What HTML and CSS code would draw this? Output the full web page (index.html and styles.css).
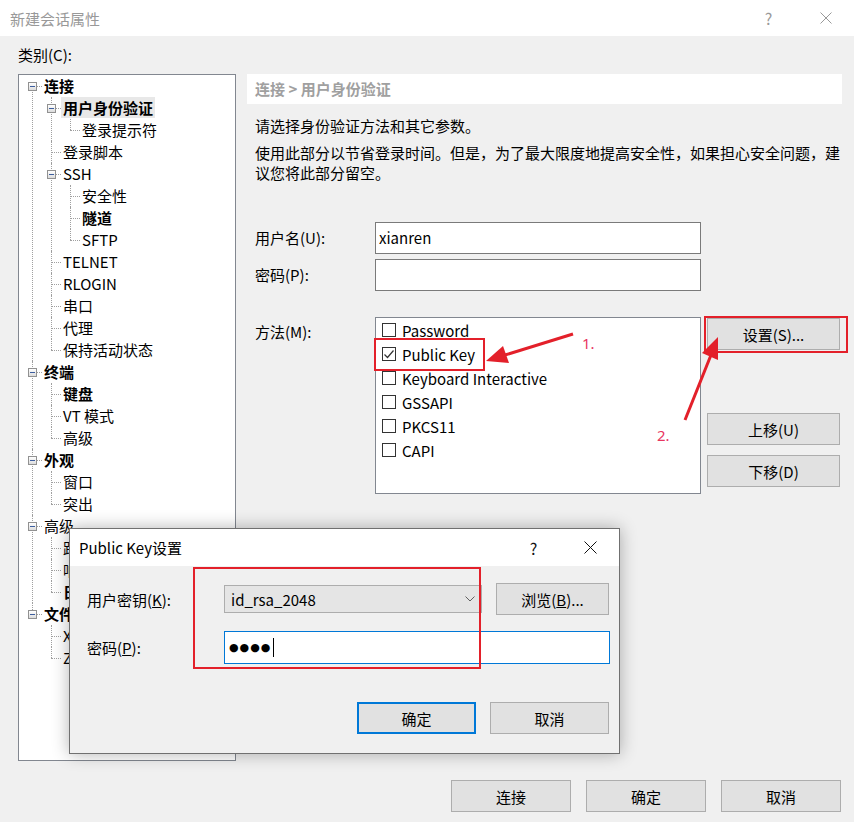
FILE: index.html
```html
<!DOCTYPE html>
<html lang="zh-CN">
<head>
    <meta charset="UTF-8">
    <title>新建会话属性</title>
    <link rel="stylesheet" href="styles.css">
</head>
<body>
    <div class="window">
        <div class="titlebar">
            <span class="title">新建会话属性</span>
            <span class="tb-btn">?</span>
            <span class="tb-btn">
                <svg width="12" height="12" viewBox="0 0 12 12"><path d="M0.5 0.5L11.5 11.5M11.5 0.5L0.5 11.5" stroke="#999" stroke-width="1"/></svg>
            </span>
        </div>

        <div class="body">
            <div class="cat-label">类别(C):</div>
            <div class="columns">
                <div class="tree-box">
                    <ul class="tree">
                        <li><div class="row"><i class="box"></i><span class="b">连接</span></div>
                            <ul>
                                <li><div class="row"><i class="box"></i><span class="b sel">用户身份验证</span></div>
                                    <ul>
                                        <li><div class="row"><span>登录提示符</span></div></li>
                                    </ul>
                                </li>
                                <li><div class="row"><span>登录脚本</span></div></li>
                                <li><div class="row"><i class="box"></i><span>SSH</span></div>
                                    <ul>
                                        <li><div class="row"><span>安全性</span></div></li>
                                        <li><div class="row"><span class="b">隧道</span></div></li>
                                        <li><div class="row"><span>SFTP</span></div></li>
                                    </ul>
                                </li>
                                <li><div class="row"><span>TELNET</span></div></li>
                                <li><div class="row"><span>RLOGIN</span></div></li>
                                <li><div class="row"><span>串口</span></div></li>
                                <li><div class="row"><span>代理</span></div></li>
                                <li><div class="row"><span>保持活动状态</span></div></li>
                            </ul>
                        </li>
                        <li><div class="row"><i class="box"></i><span class="b">终端</span></div>
                            <ul>
                                <li><div class="row"><span class="b">键盘</span></div></li>
                                <li><div class="row"><span>VT 模式</span></div></li>
                                <li><div class="row"><span>高级</span></div></li>
                            </ul>
                        </li>
                        <li><div class="row"><i class="box"></i><span class="b">外观</span></div>
                            <ul>
                                <li><div class="row"><span>窗口</span></div></li>
                                <li><div class="row"><span>突出</span></div></li>
                            </ul>
                        </li>
                        <li><div class="row"><i class="box"></i><span>高级</span></div>
                            <ul>
                                <li><div class="row"><span>跟踪</span></div></li>
                                <li><div class="row"><span>响铃</span></div></li>
                                <li><div class="row"><span class="b">日志</span></div></li>
                            </ul>
                        </li>
                        <li><div class="row"><i class="box"></i><span class="b">文件传输</span></div>
                            <ul>
                                <li><div class="row"><span>X/YMODEM</span></div></li>
                                <li><div class="row"><span>ZMODEM</span></div></li>
                            </ul>
                        </li>
                    </ul>
                </div>

                <div class="panel">
                    <div class="crumb">连接 &gt; 用户身份验证</div>
                    <p class="desc">请选择身份验证方法和其它参数。</p>
                    <p class="desc desc2">使用此部分以节省登录时间。但是，为了最大限度地提高安全性，如果担心安全问题，建议您将此部分留空。</p>

                    <div class="field">
                        <label>用户名(U):</label>
                        <input class="text-input" type="text" value="xianren">
                    </div>
                    <div class="field field-pw">
                        <label>密码(P):</label>
                        <input class="text-input" type="text" value="">
                    </div>

                    <div class="method">
                        <label>方法(M):</label>
                        <div class="listbox">
                            <div class="opt"><span class="chk"></span>Password</div>
                            <div class="opt"><span class="chk"><svg width="12" height="12" viewBox="0 0 12 12"><path d="M1.5 6.5L4.5 9.5L10.5 2.5" fill="none" stroke="#333" stroke-width="1.2"/></svg></span>Public Key</div>
                            <div class="opt"><span class="chk"></span>Keyboard Interactive</div>
                            <div class="opt"><span class="chk"></span>GSSAPI</div>
                            <div class="opt"><span class="chk"></span>PKCS11</div>
                            <div class="opt"><span class="chk"></span>CAPI</div>
                        </div>
                        <div class="side">
                            <button class="btn side-btn">设置(S)...</button>
                            <button class="btn side-btn up-btn">上移(U)</button>
                            <button class="btn side-btn down-btn">下移(D)</button>
                        </div>
                    </div>
                </div>
            </div>

            <div class="footer">
                <button class="btn foot-btn">连接</button>
                <button class="btn foot-btn">确定</button>
                <button class="btn foot-btn">取消</button>
            </div>
        </div>
    </div>

    <div class="sub">
        <div class="sub-title">
            <span class="sub-name">Public Key设置</span>
            <span class="tb-btn sub-tb">?</span>
            <span class="tb-btn sub-tb">
                <svg width="13" height="13" viewBox="0 0 13 13"><path d="M0.5 0.5L12.5 12.5M12.5 0.5L0.5 12.5" stroke="#111" stroke-width="1"/></svg>
            </span>
        </div>
        <div class="sub-body">
            <div class="sub-row">
                <label>用户密钥(<u>K</u>):</label>
                <div class="combo">
                    <span>id_rsa_2048</span>
                    <svg width="10" height="6" viewBox="0 0 10 6"><path d="M0.5 0.5L5 5L9.5 0.5" fill="none" stroke="#606060" stroke-width="1"/></svg>
                </div>
                <button class="btn browse">浏览(<u>B</u>)...</button>
            </div>
            <div class="sub-row sub-row2">
                <label>密码(<u>P</u>):</label>
                <div class="pw-input"><span class="dots">●●●●</span><span class="caret"></span></div>
            </div>
            <div class="sub-actions">
                <button class="btn sub-btn default">确定</button>
                <button class="btn sub-btn">取消</button>
            </div>
        </div>
    </div>

    <!-- 标注 -->
    <div class="mark mark-pk"></div>
    <div class="mark mark-set"></div>
    <div class="mark mark-key"></div>
    <svg class="arrows" width="854" height="822" viewBox="0 0 854 822">
        <line x1="573" y1="334" x2="505" y2="355" stroke="#e3202a" stroke-width="3"/>
        <polygon points="486,361 509,363 503,346" fill="#e3202a"/>
        <line x1="685" y1="420" x2="711" y2="355" stroke="#e3202a" stroke-width="3"/>
        <polygon points="718,337 718,360 702,353" fill="#e3202a"/>
    </svg>
    <span class="num num1">1.</span>
    <span class="num num2">2.</span>
</body>
</html>
```

FILE: styles.css
```css
body {
    margin: 0;
    width: 854px;
    height: 822px;
    overflow: hidden;
    position: relative;
    background: #f0f0f0;
    font-family: "Noto Sans CJK SC", "Noto Sans", sans-serif;
    font-size: 15px;
    color: #000;
}
.titlebar {
    height: 36px;
    background: #fff;
    display: flex;
    align-items: center;
}
.title {
    flex: 1;
    padding-left: 10px;
    color: #999;
}
.tb-btn {
    width: 57px;
    height: 36px;
    display: flex;
    align-items: center;
    justify-content: center;
    color: #999;
    font-size: 16px;
}
.body {
    padding: 0 12px 0 18px;
}
.cat-label {
    height: 38px;
    box-sizing: border-box;
    padding-top: 9px;
    line-height: 20px;
}
.columns {
    display: flex;
    gap: 11px;
    height: 687px;
}
.tree-box {
    width: 218px;
    box-sizing: border-box;
    border: 1px solid #828790;
    background: #fff;
    padding-top: 0;
    overflow: hidden;
}
.tree, .tree ul {
    list-style: none;
    margin: 0;
    padding: 0;
}
.tree ul {
    padding-left: 19px;
}
.tree li {
    position: relative;
}
.tree li::before {
    content: '';
    position: absolute;
    left: 13px;
    top: 11px;
    width: 10px;
    border-top: 1px dotted #a0a0a0;
}
.tree li::after {
    content: '';
    position: absolute;
    left: 13px;
    top: 0;
    bottom: 0;
    border-left: 1px dotted #a0a0a0;
}
.tree > li:first-child::after {
    top: 11px;
}
.tree li:last-child::after {
    bottom: auto;
    height: 11px;
}
.row {
    position: relative;
    height: 22px;
    line-height: 22px;
    padding-left: 25px;
    white-space: nowrap;
}
.box {
    position: absolute;
    left: 9px;
    top: 7px;
    width: 9px;
    height: 9px;
    box-sizing: border-box;
    border: 1px solid #919191;
    background: linear-gradient(#3d5e9e, #3d5e9e) center / 5px 1px no-repeat, linear-gradient(#fff, #dcdcdc);
    z-index: 1;
}
.b {
    font-weight: bold;
}
.sel {
    background: #e8e8e8;
    padding: 0 2px;
    margin-left: -2px;
}
.panel {
    flex: 1;
}
.crumb {
    height: 30px;
    line-height: 30px;
    background: #fff;
    color: #a0a0a0;
    font-weight: bold;
    padding-left: 8px;
}
.desc {
    margin: 12px 0 0;
    padding-left: 8px;
    width: 586px;
    line-height: 20px;
}
.desc2 {
    margin-top: 7px;
}
.field {
    display: flex;
    align-items: center;
    padding-left: 8px;
    margin-top: 39px;
}
.field-pw {
    margin-top: 5px;
}
.field label, .method label {
    width: 120px;
    line-height: 20px;
}
.text-input {
    width: 326px;
    height: 32px;
    box-sizing: border-box;
    border: 1px solid #7a7a7a;
    padding: 0 3px 2px;
    font: inherit;
    background: #fff;
}
.method {
    display: flex;
    padding-left: 8px;
    margin-top: 26px;
}
.method label {
    padding-top: 5px;
}
.listbox {
    width: 326px;
    height: 177px;
    box-sizing: border-box;
    border: 1px solid #828790;
    background: #fff;
    padding: 0 0 0 6px;
}
.opt {
    height: 24px;
    display: flex;
    align-items: center;
    gap: 6px;
}
.chk {
    width: 14px;
    height: 14px;
    box-sizing: border-box;
    border: 1px solid #333;
    background: #fff;
    display: flex;
    align-items: center;
    justify-content: center;
}
.side {
    display: flex;
    flex-direction: column;
    margin-left: 6px;
    padding-top: 1px;
}
.btn {
    font: inherit;
    color: #000;
    background: #e1e1e1;
    border: 1px solid #adadad;
    padding: 0;
    height: 32px;
}
.side-btn {
    width: 133px;
}
.up-btn {
    margin-top: 63px;
}
.down-btn {
    margin-top: 10px;
}
.footer {
    display: flex;
    justify-content: flex-end;
    gap: 15px;
    margin-top: 19px;
    padding-right: 1px;
}
.foot-btn {
    width: 120px;
}
.sub {
    position: absolute;
    left: 69px;
    top: 528px;
    width: 551px;
    height: 226px;
    box-sizing: border-box;
    border: 1px solid #707070;
    background: #f0f0f0;
    box-shadow: 0 0 16px rgba(0, 0, 0, 0.3);
}
.sub-title {
    height: 37px;
    background: #fff;
    display: flex;
    align-items: center;
}
.sub-name {
    flex: 1;
    padding-left: 9px;
}
.sub-tb {
    height: 37px;
    color: #111;
}
.sub-body {
    padding: 17px 9px 0 17px;
}
.sub-row {
    display: flex;
    align-items: center;
    height: 32px;
}
.sub-row label {
    width: 137px;
}
.combo {
    width: 258px;
    height: 28px;
    box-sizing: border-box;
    border: 1px solid #adadad;
    background: #e5e5e5;
    display: flex;
    align-items: center;
    justify-content: space-between;
    padding: 0 6px 0 6px;
}
.browse {
    width: 113px;
    margin-left: 14px;
}
.sub-row2 {
    margin-top: 16px;
    height: 33px;
}
.pw-input {
    width: 386px;
    height: 33px;
    box-sizing: border-box;
    border: 1px solid #0078d7;
    background: #fff;
    display: flex;
    align-items: center;
    padding-left: 4px;
}
.dots {
    font-family: "DejaVu Sans", sans-serif;
    font-size: 11px;
    letter-spacing: 1px;
}
.caret {
    width: 1px;
    height: 19px;
    background: #000;
    margin-left: 2px;
}
.sub-actions {
    display: flex;
    justify-content: flex-end;
    gap: 14px;
    margin-top: 38px;
    padding-right: 1px;
}
.sub-btn {
    width: 119px;
}
.default {
    border: 2px solid #0078d7;
}
.mark {
    position: absolute;
    border: 2px solid #e3202a;
}
.mark-pk {
    left: 374px;
    top: 338px;
    width: 107px;
    height: 29px;
}
.mark-set {
    left: 704px;
    top: 316px;
    width: 140px;
    height: 33px;
}
.mark-key {
    left: 193px;
    top: 567px;
    width: 284px;
    height: 98px;
}
.arrows {
    position: absolute;
    left: 0;
    top: 0;
    pointer-events: none;
}
.num {
    position: absolute;
    color: #e8355f;
    font-family: "Noto Sans", sans-serif;
    font-size: 15px;
    line-height: 20px;
}
.num1 {
    left: 582px;
    top: 333px;
}
.num2 {
    left: 657px;
    top: 425px;
}
```
